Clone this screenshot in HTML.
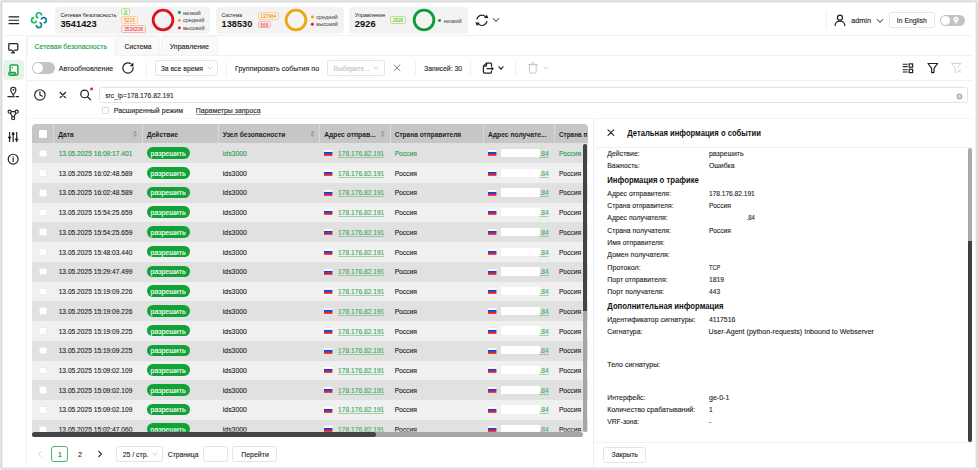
<!DOCTYPE html><html lang="ru"><head><meta charset="utf-8"><title>Сетевая безопасность</title><style>

html,body{margin:0;padding:0;background:#fff;}
body{width:978px;height:470px;overflow:hidden;position:relative;font-family:"Liberation Sans",sans-serif;}
.b{position:absolute;box-sizing:border-box;}
svg{overflow:visible;}
#txt{position:absolute;left:0;top:0;font-family:"Liberation Sans",sans-serif;}
#txt text{white-space:pre;}
.u{text-decoration:underline;text-decoration-thickness:0.7px;text-underline-offset:1px;}
.w{font-weight:700;}

</style></head><body>
<div class="b" style="left:0.00px;top:0.00px;width:978.00px;height:470.00px;border:1px solid #e4e4e4;background:#fff;border-radius:1.5px;"></div>
<div class="b" style="left:1.00px;top:1.00px;width:976.00px;height:468.00px;border:1px solid #d9d9d9;"></div>
<div class="b" style="left:2.00px;top:2.00px;width:974.00px;height:466.00px;border:1px solid #f2f2f2;"></div>
<div class="b" style="left:2.00px;top:34.80px;width:970.00px;height:1.00px;background:#f1f1f1;"></div>
<svg class="b" style="left:8.00px;top:15.00px;" width="12" height="10" viewBox="0 0 12 10"><path d="M1.0 1.8H10.7M1.0 5.2H10.7M1.0 8.6H10.7" stroke="#222" stroke-width="1.15" stroke-linecap="round" fill="none"/></svg>
<svg class="b" style="left:0.00px;top:0.00px;" width="60" height="40" viewBox="0 0 60 40"><g fill="none" stroke-width="1.6" stroke-linecap="butt"><path d="M36.64 20.74A2.6 2.6 0 1 1 34.19 17.60" stroke="#14c03f"/><path d="M38.36 17.94A2.6 2.6 0 1 1 41.50 15.49" stroke="#12b87a"/><path d="M41.16 19.66A2.6 2.6 0 1 1 43.61 22.80" stroke="#0c7c96"/><path d="M39.44 22.46A2.6 2.6 0 1 1 36.30 24.91" stroke="#0c8a7a"/></g></svg>
<div class="b" style="left:54.90px;top:7.00px;width:155.40px;height:26.90px;background:#f3f3f3;border-radius:4px;"></div>
<div class="b" style="left:215.80px;top:7.00px;width:128.20px;height:26.90px;background:#f3f3f3;border-radius:4px;"></div>
<div class="b" style="left:349.00px;top:7.00px;width:118.80px;height:26.90px;background:#f3f3f3;border-radius:4px;"></div>
<div class="b" style="left:121.40px;top:7.50px;width:8.40px;height:7.60px;background:#f0fae4;border:0.9px solid #b4e293;border-radius:1.8px;"></div>
<div class="b" style="left:121.40px;top:16.30px;width:16.20px;height:7.40px;background:#fff3e0;border:0.9px solid #f8d3a0;border-radius:1.8px;"></div>
<div class="b" style="left:121.40px;top:25.00px;width:24.20px;height:7.60px;background:#ffeceb;border:0.9px solid #f7b5b2;border-radius:1.8px;"></div>
<div class="b" style="left:257.50px;top:12.40px;width:21.40px;height:7.20px;background:#fff3e0;border:0.9px solid #f8d3a0;border-radius:1.8px;"></div>
<div class="b" style="left:257.50px;top:21.10px;width:13.50px;height:7.30px;background:#ffeceb;border:0.9px solid #f7b5b2;border-radius:1.8px;"></div>
<div class="b" style="left:390.00px;top:16.40px;width:15.70px;height:7.60px;background:#f0fae4;border:0.9px solid #b4e293;border-radius:1.8px;"></div>
<svg class="b" style="left:151.00px;top:8.45px;" width="24" height="24" viewBox="0 0 24 24"><circle cx="12" cy="12" r="9.85" fill="none" stroke="#dc1420" stroke-width="2.8"/></svg>
<svg class="b" style="left:284.10px;top:8.45px;" width="24" height="24" viewBox="0 0 24 24"><circle cx="12" cy="12" r="9.85" fill="none" stroke="#eca90f" stroke-width="2.8"/></svg>
<svg class="b" style="left:411.70px;top:8.45px;" width="24" height="24" viewBox="0 0 24 24"><circle cx="12" cy="12" r="9.85" fill="none" stroke="#0f9a35" stroke-width="2.8"/></svg>
<svg class="b" style="left:0.00px;top:0.00px;" width="10" height="10" viewBox="0 0 10 10"><circle cx="179.4" cy="12.5" r="1.45" fill="#0f9a35"/></svg>
<svg class="b" style="left:0.00px;top:0.00px;" width="10" height="10" viewBox="0 0 10 10"><circle cx="179.4" cy="20.4" r="1.45" fill="#f0a010"/></svg>
<svg class="b" style="left:0.00px;top:0.00px;" width="10" height="10" viewBox="0 0 10 10"><circle cx="179.4" cy="27.9" r="1.45" fill="#dc1420"/></svg>
<svg class="b" style="left:0.00px;top:0.00px;" width="10" height="10" viewBox="0 0 10 10"><circle cx="312.4" cy="16.9" r="1.45" fill="#f0a010"/></svg>
<svg class="b" style="left:0.00px;top:0.00px;" width="10" height="10" viewBox="0 0 10 10"><circle cx="312.4" cy="24.3" r="1.45" fill="#dc1420"/></svg>
<svg class="b" style="left:0.00px;top:0.00px;" width="10" height="10" viewBox="0 0 10 10"><circle cx="439.6" cy="20.5" r="1.45" fill="#0f9a35"/></svg>
<svg class="b" style="left:0.00px;top:0.00px;" width="10" height="10" viewBox="0 0 10 10"><g fill="none" stroke="#222" stroke-width="1.2"><path d="M476.83 19.41A5.15 5.15 0 0 1 485.60 16.72"/><path d="M486.97 21.19A5.15 5.15 0 0 1 478.20 23.88"/></g><path d="M486.98 14.70L483.96 17.90L488.34 18.26Z" fill="#222"/><path d="M476.82 25.90L479.84 22.70L475.46 22.34Z" fill="#222"/></svg>
<svg class="b" style="left:491.45px;top:15.40px;" width="10" height="10" viewBox="0 0 10 10"><path d="M2.30 3.50L5 6.50L7.70 3.50" fill="none" stroke="#222" stroke-width="1.0" stroke-linecap="round" stroke-linejoin="round"/></svg>
<div class="b" style="left:826.20px;top:12.00px;width:1.00px;height:15.50px;background:#f1f1f1;"></div>
<svg class="b" style="left:0.00px;top:0.00px;" width="10" height="10" viewBox="0 0 10 10"><g fill="none" stroke="#222" stroke-width="1.25" stroke-linecap="round"><circle cx="839.95" cy="17.7" r="2.5"/><path d="M835.1 25.5A4.85 4.3 0 0 1 844.8 25.5"/></g></svg>
<svg class="b" style="left:874.50px;top:15.50px;" width="10" height="10" viewBox="0 0 10 10"><path d="M2.30 3.50L5 6.50L7.70 3.50" fill="none" stroke="#222" stroke-width="1.0" stroke-linecap="round" stroke-linejoin="round"/></svg>
<div class="b" style="left:888.70px;top:12.40px;width:45.90px;height:16.00px;border:1px solid #e4e4e4;border-radius:2.5px;background:#fff;"></div>
<div class="b" style="left:940.00px;top:15.10px;width:24.60px;height:10.70px;background:#c3c3c3;border-radius:6px;"></div>
<div class="b" style="left:941.00px;top:16.10px;width:8.70px;height:8.70px;background:#fff;border-radius:50%;"></div>
<svg class="b" style="left:952.10px;top:16.20px;" width="8" height="8" viewBox="0 0 8 8"><circle cx="4" cy="3.2" r="2.5" fill="#fff"/><circle cx="4" cy="3.1" r="0.9" fill="#c4c4c4"/><path d="M4 5V7.2" stroke="#fff" stroke-width="2"/></svg>
<div class="b" style="left:26.00px;top:36.00px;width:1.00px;height:431.50px;background:#f1f1f1;"></div>
<div class="b" style="left:3.10px;top:60.20px;width:21.00px;height:19.60px;background:#e4f5e8;border-radius:4px;"></div>
<svg class="b" style="left:0.00px;top:0.00px;" width="10" height="10" viewBox="0 0 10 10">
<g fill="none" stroke="#222" stroke-width="1.25" stroke-linejoin="round" stroke-linecap="round">
<path d="M12.0 50.2H9.7A0.9 0.9 0 0 1 8.8 49.3V44.4A0.9 0.9 0 0 1 9.7 43.5H16.9A0.9 0.9 0 0 1 17.8 44.4V49.3A0.9 0.9 0 0 1 16.9 50.2H14.8"/>
<path d="M12.6 50.4L13.3 51.2L14.0 50.4" stroke-width="1"/>
<path d="M13.3 51.3L14.9 53.1H11.5Z" fill="#222" stroke-width="0.7"/>
</g>
<g stroke="#1fa345" stroke-width="1.4" stroke-linejoin="round">
<rect x="10.1" y="65.0" width="7.8" height="10.0" rx="1.3" fill="#f4fbf6"/>
<rect x="8.7" y="72.5" width="7.0" height="2.7" rx="1.35" fill="#8fd3a1"/>
</g>
<circle cx="12.3" cy="67.8" r="0.75" fill="#1fa345"/>
<g fill="none" stroke="#222" stroke-width="1.15" stroke-linejoin="round" stroke-linecap="round">
<path d="M13.3 94.9C11.2 92.5 10.7 91.3 10.7 89.9A2.6 2.6 0 0 1 15.9 89.9C15.9 91.3 15.4 92.5 13.3 94.9Z"/>
<circle cx="13.3" cy="89.8" r="0.45" stroke-width="0.9"/>
<path d="M7.9 96.5H12.1M16.1 96.5H18.5" stroke-width="1.25"/>
<circle cx="13.3" cy="96.5" r="0.95" stroke-width="0.8"/>
</g>
<g fill="none" stroke="#222" stroke-width="1.15">
<circle cx="9.65" cy="111.65" r="1.55"/><circle cx="16.7" cy="111.65" r="1.55"/><circle cx="13.15" cy="118.2" r="1.55"/>
<path d="M11.2 111.65H15.15M10.4 113.0L12.4 116.85M15.95 113.0L13.9 116.85"/>
</g>
<g fill="none" stroke="#222" stroke-width="1.2" stroke-linecap="butt">
<path d="M9.57 132V142M13.15 132V142M16.7 132V142"/>
<path d="M8.0 137.5H11.1M15.1 139.6H18.3" stroke-width="1.5"/>
</g>
<circle cx="13.15" cy="133.9" r="1.45" fill="#222"/>
<g fill="none" stroke="#222" stroke-width="1.2" stroke-linecap="round">
<circle cx="13.15" cy="159.2" r="4.95"/>
<path d="M13.15 158.4V161.5"/><path d="M13.15 156.8V156.9" stroke-width="1.3"/>
</g>
</svg>
<div class="b" style="left:26.80px;top:36.30px;width:88.20px;height:20.10px;background:#fff;border:1px solid #f2f2f2;border-bottom:none;border-radius:4.5px 4.5px 0 0;"></div>
<div class="b" style="left:116.20px;top:36.30px;width:44.00px;height:19.30px;background:#f9f9f9;border:1px solid #f2f2f2;border-bottom:none;border-radius:4.5px 4.5px 0 0;"></div>
<div class="b" style="left:161.30px;top:36.30px;width:56.50px;height:19.30px;background:#f9f9f9;border:1px solid #f2f2f2;border-bottom:none;border-radius:4.5px 4.5px 0 0;"></div>
<div class="b" style="left:115.00px;top:55.30px;width:857.00px;height:1.00px;background:#f2f2f2;"></div>
<div class="b" style="left:27.00px;top:80.00px;width:945.00px;height:1.00px;background:#f1f1f1;"></div>
<div class="b" style="left:32.10px;top:62.30px;width:22.50px;height:11.60px;background:#c3c3c3;border-radius:6px;"></div>
<div class="b" style="left:33.10px;top:63.30px;width:9.60px;height:9.60px;background:#fff;border-radius:50%;"></div>
<svg class="b" style="left:0.00px;top:0.00px;" width="10" height="10" viewBox="0 0 10 10"><path d="M133.10 67.46A5.15 5.15 0 1 1 130.78 63.68" fill="none" stroke="#222" stroke-width="1.2" stroke-linecap="round"/><path d="M133.4 62.6V66.2H129.7Z" fill="#111"/></svg>
<div class="b" style="left:146.20px;top:60.50px;width:1.00px;height:15.50px;background:#f1f1f1;"></div>
<div class="b" style="left:154.90px;top:60.40px;width:62.70px;height:15.80px;border:1px solid #e4e4e4;border-radius:2.5px;background:#fff;"></div>
<svg class="b" style="left:204.60px;top:62.90px;" width="10" height="10" viewBox="0 0 10 10"><path d="M2.90 3.70L5 6.30L7.10 3.70" fill="none" stroke="#c8c8c8" stroke-width="0.9" stroke-linecap="round" stroke-linejoin="round"/></svg>
<div class="b" style="left:225.80px;top:60.50px;width:1.00px;height:15.50px;background:#f1f1f1;"></div>
<div class="b" style="left:327.10px;top:60.40px;width:57.50px;height:15.80px;border:1px solid #e4e4e4;border-radius:2.5px;background:#fff;"></div>
<svg class="b" style="left:371.30px;top:62.90px;" width="10" height="10" viewBox="0 0 10 10"><path d="M2.90 3.70L5 6.30L7.10 3.70" fill="none" stroke="#c8c8c8" stroke-width="0.9" stroke-linecap="round" stroke-linejoin="round"/></svg>
<svg class="b" style="left:392.30px;top:62.90px;" width="10" height="10" viewBox="0 0 10 10"><path d="M2.1 2.0L7.9 7.6M7.9 2.0L2.1 7.6" stroke="#777" stroke-width="1.0" stroke-linecap="round"/></svg>
<div class="b" style="left:415.10px;top:60.50px;width:1.00px;height:15.50px;background:#f1f1f1;"></div>
<div class="b" style="left:470.10px;top:60.50px;width:1.00px;height:15.50px;background:#f1f1f1;"></div>
<svg class="b" style="left:0.00px;top:0.00px;" width="10" height="10" viewBox="0 0 10 10"><g fill="none" stroke="#222" stroke-width="1.25" stroke-linejoin="round" stroke-linecap="round">
<path d="M491.5 66.2V64.0A0.9 0.9 0 0 0 490.6 63.1H486.4L483.4 66.1V72.1A0.9 0.9 0 0 0 484.3 73.0H490.6A0.9 0.9 0 0 0 491.5 72.1V71.0"/>
<path d="M486.5 63.3V65.4A0.8 0.8 0 0 1 485.7 66.2H483.6"/>
<path d="M487.0 68.7H492.0"/></g>
<path d="M491.5 66.6L494.0 68.7L491.5 70.8Z" fill="#222"/></svg>
<svg class="b" style="left:496.20px;top:63.00px;" width="10" height="10" viewBox="0 0 10 10"><path d="M2.90 3.70L5 6.30L7.10 3.70" fill="none" stroke="#222" stroke-width="1.05" stroke-linecap="round" stroke-linejoin="round"/></svg>
<div class="b" style="left:514.70px;top:60.50px;width:1.00px;height:15.50px;background:#f1f1f1;"></div>
<svg class="b" style="left:0.00px;top:0.00px;" width="10" height="10" viewBox="0 0 10 10"><g fill="none" stroke="#c6c6c6" stroke-width="1.0" stroke-linejoin="round" stroke-linecap="round">
<path d="M528.1 64.7H537.7"/><path d="M531.4 64.5A1.5 1.8 0 0 1 534.4 64.5"/>
<path d="M529.6 65.2V72.0A1.1 1.1 0 0 0 530.7 73.1H535.1A1.1 1.1 0 0 0 536.2 72.0V65.2"/></g></svg>
<svg class="b" style="left:541.20px;top:63.00px;" width="10" height="10" viewBox="0 0 10 10"><path d="M2.90 3.70L5 6.30L7.10 3.70" fill="none" stroke="#cfcfcf" stroke-width="0.9" stroke-linecap="round" stroke-linejoin="round"/></svg>
<svg class="b" style="left:0.00px;top:0.00px;" width="10" height="10" viewBox="0 0 10 10"><g fill="none" stroke="#222" stroke-width="1.1"><path d="M902.7 64.3H907.6M902.7 66.6H907.6M902.7 69.7H907.6M902.7 72.0H907.6"/><rect x="909.2" y="63.9" width="3.4" height="3.3" stroke-width="1.2"/><rect x="909.2" y="69.3" width="3.4" height="3.3" stroke-width="1.2"/></g></svg>
<svg class="b" style="left:926.50px;top:62.00px;" width="12" height="12" viewBox="0 0 12 12"><path d="M1 1.5H10.6L7 6.3V10.6H4.6V6.3Z" fill="none" stroke="#222" stroke-width="1.2" stroke-linejoin="round"/></svg>
<svg class="b" style="left:951.00px;top:61.50px;" width="12" height="12" viewBox="0 0 12 12"><g fill="none" stroke="#c9c9c9" stroke-width="0.9" stroke-linejoin="round" stroke-linecap="round"><path d="M6.6 5.6L9.8 1.4H0.6L4.2 6.2V10.6"/><path d="M7 7.6L9.8 10.4M9.8 7.6L7 10.4"/></g></svg>
<svg class="b" style="left:0.00px;top:0.00px;" width="10" height="10" viewBox="0 0 10 10"><g fill="none" stroke="#222" stroke-width="1.15" stroke-linecap="round" stroke-linejoin="round"><circle cx="39.9" cy="94.95" r="5.2"/><path d="M39.9 91.9V95.0L42.3 96.2"/></g>
<path d="M60.2 92.5L65.5 97.6M65.5 92.5L60.2 97.6" stroke="#222" stroke-width="1.3" stroke-linecap="round"/>
<g fill="none" stroke="#222" stroke-width="1.2" stroke-linecap="round"><circle cx="84.6" cy="93.9" r="3.85"/><path d="M87.4 96.8L90.5 99.8"/></g><circle cx="91.6" cy="89.0" r="1.45" fill="#ee1c2e"/></svg>
<div class="b" style="left:99.10px;top:87.30px;width:869.30px;height:15.30px;border:1px solid #e4e4e4;border-radius:2.5px;background:#fff;"></div>
<svg class="b" style="left:955.50px;top:93.00px;" width="7" height="7" viewBox="0 0 7 7"><circle cx="3.5" cy="3.5" r="2.2" fill="#dedede" stroke="#b4b4b4" stroke-width="1.6"/></svg>
<div class="b" style="left:102.20px;top:107.40px;width:6.70px;height:6.90px;border:0.8px solid #d9d9d9;border-radius:1.2px;background:#fff;"></div>
<div class="b" style="left:27.00px;top:117.80px;width:945.00px;height:1.00px;background:#f4f4f4;"></div>
<div class="b" style="left:32.00px;top:127.40px;width:555.50px;height:304.20px;background:#e1e1e1;"></div>
<div class="b" style="left:32.00px;top:124.40px;width:555.50px;height:19.10px;background:#c6c6c6;border-radius:4px 4px 0 0;"></div>
<div class="b" style="left:32.0px;top:143.5px;width:555.5px;height:288.10px;overflow:hidden;" id="rows">
<div class="b" style="left:0;top:0.00px;width:555.5px;height:19.83px;background:#e1e1e1;"></div>
<div class="b" style="left:7.20px;top:6.05px;width:7.8px;height:7.5px;background:#fff;border:0.5px solid #ececec;border-radius:1.2px;"></div>
<div class="b" style="left:114.60px;top:3.75px;width:43.4px;height:11.6px;background:#12a338;border-radius:6px;"></div>
<svg class="b" style="left:291.70px;top:6.70px" width="8.4" height="5.8" viewBox="0 0 8.4 5.8"><rect width="8.4" height="2" fill="#fff"/><rect y="1.93" width="8.4" height="2" fill="#1c3fd0"/><rect y="3.86" width="8.4" height="1.94" fill="#e0202c"/></svg>
<svg class="b" style="left:455.60px;top:6.70px" width="8.4" height="5.8" viewBox="0 0 8.4 5.8"><rect width="8.4" height="2" fill="#fff"/><rect y="1.93" width="8.4" height="2" fill="#1c3fd0"/><rect y="3.86" width="8.4" height="1.94" fill="#e0202c"/></svg>
<div class="b" style="left:469.00px;top:5.40px;width:39.4px;height:8.3px;background:#fff;"></div>
<div class="b" style="left:0;top:19.73px;width:555.5px;height:19.83px;background:#f0f0f0;"></div>
<div class="b" style="left:7.20px;top:25.78px;width:7.8px;height:7.5px;background:#fff;border:0.5px solid #ececec;border-radius:1.2px;"></div>
<div class="b" style="left:114.60px;top:23.48px;width:43.4px;height:11.6px;background:#12a338;border-radius:6px;"></div>
<svg class="b" style="left:291.70px;top:26.43px" width="8.4" height="5.8" viewBox="0 0 8.4 5.8"><rect width="8.4" height="2" fill="#fff"/><rect y="1.93" width="8.4" height="2" fill="#1c3fd0"/><rect y="3.86" width="8.4" height="1.94" fill="#e0202c"/></svg>
<svg class="b" style="left:455.60px;top:26.43px" width="8.4" height="5.8" viewBox="0 0 8.4 5.8"><rect width="8.4" height="2" fill="#fff"/><rect y="1.93" width="8.4" height="2" fill="#1c3fd0"/><rect y="3.86" width="8.4" height="1.94" fill="#e0202c"/></svg>
<div class="b" style="left:469.00px;top:25.13px;width:39.4px;height:8.3px;background:#fff;"></div>
<div class="b" style="left:0;top:39.46px;width:555.5px;height:19.83px;background:#e1e1e1;"></div>
<div class="b" style="left:7.20px;top:45.51px;width:7.8px;height:7.5px;background:#fff;border:0.5px solid #ececec;border-radius:1.2px;"></div>
<div class="b" style="left:114.60px;top:43.21px;width:43.4px;height:11.6px;background:#12a338;border-radius:6px;"></div>
<svg class="b" style="left:291.70px;top:46.16px" width="8.4" height="5.8" viewBox="0 0 8.4 5.8"><rect width="8.4" height="2" fill="#fff"/><rect y="1.93" width="8.4" height="2" fill="#1c3fd0"/><rect y="3.86" width="8.4" height="1.94" fill="#e0202c"/></svg>
<svg class="b" style="left:455.60px;top:46.16px" width="8.4" height="5.8" viewBox="0 0 8.4 5.8"><rect width="8.4" height="2" fill="#fff"/><rect y="1.93" width="8.4" height="2" fill="#1c3fd0"/><rect y="3.86" width="8.4" height="1.94" fill="#e0202c"/></svg>
<div class="b" style="left:469.00px;top:44.86px;width:39.4px;height:8.3px;background:#fff;"></div>
<div class="b" style="left:0;top:59.19px;width:555.5px;height:19.83px;background:#f0f0f0;"></div>
<div class="b" style="left:7.20px;top:65.24px;width:7.8px;height:7.5px;background:#fff;border:0.5px solid #ececec;border-radius:1.2px;"></div>
<div class="b" style="left:114.60px;top:62.94px;width:43.4px;height:11.6px;background:#12a338;border-radius:6px;"></div>
<svg class="b" style="left:291.70px;top:65.89px" width="8.4" height="5.8" viewBox="0 0 8.4 5.8"><rect width="8.4" height="2" fill="#fff"/><rect y="1.93" width="8.4" height="2" fill="#1c3fd0"/><rect y="3.86" width="8.4" height="1.94" fill="#e0202c"/></svg>
<svg class="b" style="left:455.60px;top:65.89px" width="8.4" height="5.8" viewBox="0 0 8.4 5.8"><rect width="8.4" height="2" fill="#fff"/><rect y="1.93" width="8.4" height="2" fill="#1c3fd0"/><rect y="3.86" width="8.4" height="1.94" fill="#e0202c"/></svg>
<div class="b" style="left:469.00px;top:64.59px;width:39.4px;height:8.3px;background:#fff;"></div>
<div class="b" style="left:0;top:78.92px;width:555.5px;height:19.83px;background:#e1e1e1;"></div>
<div class="b" style="left:7.20px;top:84.97px;width:7.8px;height:7.5px;background:#fff;border:0.5px solid #ececec;border-radius:1.2px;"></div>
<div class="b" style="left:114.60px;top:82.67px;width:43.4px;height:11.6px;background:#12a338;border-radius:6px;"></div>
<svg class="b" style="left:291.70px;top:85.62px" width="8.4" height="5.8" viewBox="0 0 8.4 5.8"><rect width="8.4" height="2" fill="#fff"/><rect y="1.93" width="8.4" height="2" fill="#1c3fd0"/><rect y="3.86" width="8.4" height="1.94" fill="#e0202c"/></svg>
<svg class="b" style="left:455.60px;top:85.62px" width="8.4" height="5.8" viewBox="0 0 8.4 5.8"><rect width="8.4" height="2" fill="#fff"/><rect y="1.93" width="8.4" height="2" fill="#1c3fd0"/><rect y="3.86" width="8.4" height="1.94" fill="#e0202c"/></svg>
<div class="b" style="left:469.00px;top:84.32px;width:39.4px;height:8.3px;background:#fff;"></div>
<div class="b" style="left:0;top:98.65px;width:555.5px;height:19.83px;background:#f0f0f0;"></div>
<div class="b" style="left:7.20px;top:104.70px;width:7.8px;height:7.5px;background:#fff;border:0.5px solid #ececec;border-radius:1.2px;"></div>
<div class="b" style="left:114.60px;top:102.40px;width:43.4px;height:11.6px;background:#12a338;border-radius:6px;"></div>
<svg class="b" style="left:291.70px;top:105.35px" width="8.4" height="5.8" viewBox="0 0 8.4 5.8"><rect width="8.4" height="2" fill="#fff"/><rect y="1.93" width="8.4" height="2" fill="#1c3fd0"/><rect y="3.86" width="8.4" height="1.94" fill="#e0202c"/></svg>
<svg class="b" style="left:455.60px;top:105.35px" width="8.4" height="5.8" viewBox="0 0 8.4 5.8"><rect width="8.4" height="2" fill="#fff"/><rect y="1.93" width="8.4" height="2" fill="#1c3fd0"/><rect y="3.86" width="8.4" height="1.94" fill="#e0202c"/></svg>
<div class="b" style="left:469.00px;top:104.05px;width:39.4px;height:8.3px;background:#fff;"></div>
<div class="b" style="left:0;top:118.38px;width:555.5px;height:19.83px;background:#e1e1e1;"></div>
<div class="b" style="left:7.20px;top:124.43px;width:7.8px;height:7.5px;background:#fff;border:0.5px solid #ececec;border-radius:1.2px;"></div>
<div class="b" style="left:114.60px;top:122.13px;width:43.4px;height:11.6px;background:#12a338;border-radius:6px;"></div>
<svg class="b" style="left:291.70px;top:125.08px" width="8.4" height="5.8" viewBox="0 0 8.4 5.8"><rect width="8.4" height="2" fill="#fff"/><rect y="1.93" width="8.4" height="2" fill="#1c3fd0"/><rect y="3.86" width="8.4" height="1.94" fill="#e0202c"/></svg>
<svg class="b" style="left:455.60px;top:125.08px" width="8.4" height="5.8" viewBox="0 0 8.4 5.8"><rect width="8.4" height="2" fill="#fff"/><rect y="1.93" width="8.4" height="2" fill="#1c3fd0"/><rect y="3.86" width="8.4" height="1.94" fill="#e0202c"/></svg>
<div class="b" style="left:469.00px;top:123.78px;width:39.4px;height:8.3px;background:#fff;"></div>
<div class="b" style="left:0;top:138.11px;width:555.5px;height:19.83px;background:#f0f0f0;"></div>
<div class="b" style="left:7.20px;top:144.16px;width:7.8px;height:7.5px;background:#fff;border:0.5px solid #ececec;border-radius:1.2px;"></div>
<div class="b" style="left:114.60px;top:141.86px;width:43.4px;height:11.6px;background:#12a338;border-radius:6px;"></div>
<svg class="b" style="left:291.70px;top:144.81px" width="8.4" height="5.8" viewBox="0 0 8.4 5.8"><rect width="8.4" height="2" fill="#fff"/><rect y="1.93" width="8.4" height="2" fill="#1c3fd0"/><rect y="3.86" width="8.4" height="1.94" fill="#e0202c"/></svg>
<svg class="b" style="left:455.60px;top:144.81px" width="8.4" height="5.8" viewBox="0 0 8.4 5.8"><rect width="8.4" height="2" fill="#fff"/><rect y="1.93" width="8.4" height="2" fill="#1c3fd0"/><rect y="3.86" width="8.4" height="1.94" fill="#e0202c"/></svg>
<div class="b" style="left:469.00px;top:143.51px;width:39.4px;height:8.3px;background:#fff;"></div>
<div class="b" style="left:0;top:157.84px;width:555.5px;height:19.83px;background:#e1e1e1;"></div>
<div class="b" style="left:7.20px;top:163.89px;width:7.8px;height:7.5px;background:#fff;border:0.5px solid #ececec;border-radius:1.2px;"></div>
<div class="b" style="left:114.60px;top:161.59px;width:43.4px;height:11.6px;background:#12a338;border-radius:6px;"></div>
<svg class="b" style="left:291.70px;top:164.54px" width="8.4" height="5.8" viewBox="0 0 8.4 5.8"><rect width="8.4" height="2" fill="#fff"/><rect y="1.93" width="8.4" height="2" fill="#1c3fd0"/><rect y="3.86" width="8.4" height="1.94" fill="#e0202c"/></svg>
<svg class="b" style="left:455.60px;top:164.54px" width="8.4" height="5.8" viewBox="0 0 8.4 5.8"><rect width="8.4" height="2" fill="#fff"/><rect y="1.93" width="8.4" height="2" fill="#1c3fd0"/><rect y="3.86" width="8.4" height="1.94" fill="#e0202c"/></svg>
<div class="b" style="left:469.00px;top:163.24px;width:39.4px;height:8.3px;background:#fff;"></div>
<div class="b" style="left:0;top:177.57px;width:555.5px;height:19.83px;background:#f0f0f0;"></div>
<div class="b" style="left:7.20px;top:183.62px;width:7.8px;height:7.5px;background:#fff;border:0.5px solid #ececec;border-radius:1.2px;"></div>
<div class="b" style="left:114.60px;top:181.32px;width:43.4px;height:11.6px;background:#12a338;border-radius:6px;"></div>
<svg class="b" style="left:291.70px;top:184.27px" width="8.4" height="5.8" viewBox="0 0 8.4 5.8"><rect width="8.4" height="2" fill="#fff"/><rect y="1.93" width="8.4" height="2" fill="#1c3fd0"/><rect y="3.86" width="8.4" height="1.94" fill="#e0202c"/></svg>
<svg class="b" style="left:455.60px;top:184.27px" width="8.4" height="5.8" viewBox="0 0 8.4 5.8"><rect width="8.4" height="2" fill="#fff"/><rect y="1.93" width="8.4" height="2" fill="#1c3fd0"/><rect y="3.86" width="8.4" height="1.94" fill="#e0202c"/></svg>
<div class="b" style="left:469.00px;top:182.97px;width:39.4px;height:8.3px;background:#fff;"></div>
<div class="b" style="left:0;top:197.30px;width:555.5px;height:19.83px;background:#e1e1e1;"></div>
<div class="b" style="left:7.20px;top:203.35px;width:7.8px;height:7.5px;background:#fff;border:0.5px solid #ececec;border-radius:1.2px;"></div>
<div class="b" style="left:114.60px;top:201.05px;width:43.4px;height:11.6px;background:#12a338;border-radius:6px;"></div>
<svg class="b" style="left:291.70px;top:204.00px" width="8.4" height="5.8" viewBox="0 0 8.4 5.8"><rect width="8.4" height="2" fill="#fff"/><rect y="1.93" width="8.4" height="2" fill="#1c3fd0"/><rect y="3.86" width="8.4" height="1.94" fill="#e0202c"/></svg>
<svg class="b" style="left:455.60px;top:204.00px" width="8.4" height="5.8" viewBox="0 0 8.4 5.8"><rect width="8.4" height="2" fill="#fff"/><rect y="1.93" width="8.4" height="2" fill="#1c3fd0"/><rect y="3.86" width="8.4" height="1.94" fill="#e0202c"/></svg>
<div class="b" style="left:469.00px;top:202.70px;width:39.4px;height:8.3px;background:#fff;"></div>
<div class="b" style="left:0;top:217.03px;width:555.5px;height:19.83px;background:#f0f0f0;"></div>
<div class="b" style="left:7.20px;top:223.08px;width:7.8px;height:7.5px;background:#fff;border:0.5px solid #ececec;border-radius:1.2px;"></div>
<div class="b" style="left:114.60px;top:220.78px;width:43.4px;height:11.6px;background:#12a338;border-radius:6px;"></div>
<svg class="b" style="left:291.70px;top:223.73px" width="8.4" height="5.8" viewBox="0 0 8.4 5.8"><rect width="8.4" height="2" fill="#fff"/><rect y="1.93" width="8.4" height="2" fill="#1c3fd0"/><rect y="3.86" width="8.4" height="1.94" fill="#e0202c"/></svg>
<svg class="b" style="left:455.60px;top:223.73px" width="8.4" height="5.8" viewBox="0 0 8.4 5.8"><rect width="8.4" height="2" fill="#fff"/><rect y="1.93" width="8.4" height="2" fill="#1c3fd0"/><rect y="3.86" width="8.4" height="1.94" fill="#e0202c"/></svg>
<div class="b" style="left:469.00px;top:222.43px;width:39.4px;height:8.3px;background:#fff;"></div>
<div class="b" style="left:0;top:236.76px;width:555.5px;height:19.83px;background:#e1e1e1;"></div>
<div class="b" style="left:7.20px;top:242.81px;width:7.8px;height:7.5px;background:#fff;border:0.5px solid #ececec;border-radius:1.2px;"></div>
<div class="b" style="left:114.60px;top:240.51px;width:43.4px;height:11.6px;background:#12a338;border-radius:6px;"></div>
<svg class="b" style="left:291.70px;top:243.46px" width="8.4" height="5.8" viewBox="0 0 8.4 5.8"><rect width="8.4" height="2" fill="#fff"/><rect y="1.93" width="8.4" height="2" fill="#1c3fd0"/><rect y="3.86" width="8.4" height="1.94" fill="#e0202c"/></svg>
<svg class="b" style="left:455.60px;top:243.46px" width="8.4" height="5.8" viewBox="0 0 8.4 5.8"><rect width="8.4" height="2" fill="#fff"/><rect y="1.93" width="8.4" height="2" fill="#1c3fd0"/><rect y="3.86" width="8.4" height="1.94" fill="#e0202c"/></svg>
<div class="b" style="left:469.00px;top:242.16px;width:39.4px;height:8.3px;background:#fff;"></div>
<div class="b" style="left:0;top:256.49px;width:555.5px;height:19.83px;background:#f0f0f0;"></div>
<div class="b" style="left:7.20px;top:262.54px;width:7.8px;height:7.5px;background:#fff;border:0.5px solid #ececec;border-radius:1.2px;"></div>
<div class="b" style="left:114.60px;top:260.24px;width:43.4px;height:11.6px;background:#12a338;border-radius:6px;"></div>
<svg class="b" style="left:291.70px;top:263.19px" width="8.4" height="5.8" viewBox="0 0 8.4 5.8"><rect width="8.4" height="2" fill="#fff"/><rect y="1.93" width="8.4" height="2" fill="#1c3fd0"/><rect y="3.86" width="8.4" height="1.94" fill="#e0202c"/></svg>
<svg class="b" style="left:455.60px;top:263.19px" width="8.4" height="5.8" viewBox="0 0 8.4 5.8"><rect width="8.4" height="2" fill="#fff"/><rect y="1.93" width="8.4" height="2" fill="#1c3fd0"/><rect y="3.86" width="8.4" height="1.94" fill="#e0202c"/></svg>
<div class="b" style="left:469.00px;top:261.89px;width:39.4px;height:8.3px;background:#fff;"></div>
<div class="b" style="left:0;top:276.22px;width:555.5px;height:19.83px;background:#e1e1e1;"></div>
<div class="b" style="left:7.20px;top:282.27px;width:7.8px;height:7.5px;background:#fff;border:0.5px solid #ececec;border-radius:1.2px;"></div>
<div class="b" style="left:114.60px;top:279.97px;width:43.4px;height:11.6px;background:#12a338;border-radius:6px;"></div>
<svg class="b" style="left:291.70px;top:282.92px" width="8.4" height="5.8" viewBox="0 0 8.4 5.8"><rect width="8.4" height="2" fill="#fff"/><rect y="1.93" width="8.4" height="2" fill="#1c3fd0"/><rect y="3.86" width="8.4" height="1.94" fill="#e0202c"/></svg>
<svg class="b" style="left:455.60px;top:282.92px" width="8.4" height="5.8" viewBox="0 0 8.4 5.8"><rect width="8.4" height="2" fill="#fff"/><rect y="1.93" width="8.4" height="2" fill="#1c3fd0"/><rect y="3.86" width="8.4" height="1.94" fill="#e0202c"/></svg>
<div class="b" style="left:469.00px;top:281.62px;width:39.4px;height:8.3px;background:#fff;"></div>
</div>
<div class="b" style="left:52.90px;top:124.40px;width:1.00px;height:19.10px;background:#d9d9d9;"></div>
<div class="b" style="left:141.70px;top:124.40px;width:1.00px;height:19.10px;background:#d9d9d9;"></div>
<div class="b" style="left:217.80px;top:124.40px;width:1.00px;height:19.10px;background:#d9d9d9;"></div>
<div class="b" style="left:318.90px;top:124.40px;width:1.00px;height:19.10px;background:#d9d9d9;"></div>
<div class="b" style="left:389.50px;top:124.40px;width:1.00px;height:19.10px;background:#d9d9d9;"></div>
<div class="b" style="left:482.80px;top:124.40px;width:1.00px;height:19.10px;background:#d9d9d9;"></div>
<div class="b" style="left:554.10px;top:124.40px;width:1.00px;height:19.10px;background:#d9d9d9;"></div>
<div class="b" style="left:39.20px;top:130.40px;width:7.70px;height:7.60px;background:#fff;border-radius:1px;"></div>
<svg class="b" style="left:0.00px;top:0.00px;" width="10" height="10" viewBox="0 0 10 10"><path d="M133.10 133.3L135.10 130.8L137.10 133.3Z M133.10 134.6L135.10 137.1L137.10 134.6Z" fill="#989898"/></svg>
<svg class="b" style="left:0.00px;top:0.00px;" width="10" height="10" viewBox="0 0 10 10"><path d="M310.40 133.3L312.40 130.8L314.40 133.3Z M310.40 134.6L312.40 137.1L314.40 134.6Z" fill="#989898"/></svg>
<svg class="b" style="left:0.00px;top:0.00px;" width="10" height="10" viewBox="0 0 10 10"><path d="M380.80 133.3L382.80 130.8L384.80 133.3Z M380.80 134.6L382.80 137.1L384.80 134.6Z" fill="#989898"/></svg>
<div class="b" style="left:32.00px;top:432.00px;width:550.60px;height:4.90px;background:#a6a6a6;border-radius:2.5px;"></div>
<div class="b" style="left:32.00px;top:432.00px;width:343.50px;height:4.90px;background:#444;border-radius:2.5px;"></div>
<div class="b" style="left:582.90px;top:143.60px;width:4.60px;height:288.00px;background:#a6a6a6;border-radius:2.3px;"></div>
<div class="b" style="left:582.90px;top:143.60px;width:4.60px;height:167.70px;background:#444;border-radius:2.3px 2.3px 0 0;"></div>
<svg class="b" style="left:36.50px;top:449.70px;" width="6" height="8" viewBox="0 0 6 8"><path d="M4.2 1.3L1.6 4L4.2 6.7" fill="none" stroke="#cfcfcf" stroke-width="0.9" stroke-linecap="round" stroke-linejoin="round"/></svg>
<div class="b" style="left:51.40px;top:445.60px;width:16.40px;height:16.10px;border:1px solid #45b568;border-radius:3px;background:#fff;"></div>
<svg class="b" style="left:97.20px;top:449.70px;" width="6" height="8" viewBox="0 0 6 8"><path d="M1.8 1.3L4.4 4L1.8 6.7" fill="none" stroke="#2a2a2a" stroke-width="1.1" stroke-linecap="round" stroke-linejoin="round"/></svg>
<div class="b" style="left:116.30px;top:445.60px;width:47.20px;height:16.10px;border:1px solid #e4e4e4;border-radius:2.5px;background:#fff;"></div>
<svg class="b" style="left:150.20px;top:449.20px;" width="10" height="10" viewBox="0 0 10 10"><path d="M3.00 3.75L5 6.25L7.00 3.75" fill="none" stroke="#c8c8c8" stroke-width="0.9" stroke-linecap="round" stroke-linejoin="round"/></svg>
<div class="b" style="left:202.80px;top:445.60px;width:25.20px;height:16.10px;border:1px solid #e4e4e4;border-radius:2.5px;background:#fff;"></div>
<div class="b" style="left:232.40px;top:445.60px;width:45.00px;height:16.10px;border:1px solid #e4e4e4;border-radius:2.5px;background:#fff;"></div>
<div class="b" style="left:593.30px;top:118.50px;width:1.00px;height:349.00px;background:#ececec;"></div>
<svg class="b" style="left:606.00px;top:127.90px;" width="10" height="10" viewBox="0 0 10 10"><path d="M2.0 1.8L7.8 7.4M7.8 1.8L2.0 7.4" stroke="#222" stroke-width="1.1" stroke-linecap="round"/></svg>
<div class="b" style="left:594.60px;top:146.80px;width:377.40px;height:1.00px;background:#f1f1f1;"></div>
<div class="b" style="left:968.10px;top:148.00px;width:4.10px;height:293.50px;background:#a9a9a9;border-radius:2px;"></div>
<div class="b" style="left:968.10px;top:241.00px;width:4.10px;height:200.50px;background:#3f3f3f;border-radius:0 0 2px 2px;"></div>
<div class="b" style="left:594.60px;top:441.80px;width:377.40px;height:1.00px;background:#f1f1f1;"></div>
<div class="b" style="left:603.40px;top:446.60px;width:42.70px;height:16.40px;border:1px solid #e4e4e4;border-radius:2.5px;background:#fff;"></div>
<svg id="txt" width="978" height="470" viewBox="0 0 978 470"><defs>
<clipPath id="cr"><rect x="32.0" y="143.5" width="550.7" height="288.1"/></clipPath>
<clipPath id="ch"><rect x="32.0" y="124.4" width="555.6" height="19.099999999999994"/></clipPath>
</defs>
<text x="60.40" y="17" font-size="6.1" fill="#222" textLength="56.20" lengthAdjust="spacingAndGlyphs">Сетевая безопасность</text>
<text x="60.40" y="27" font-size="9.5" fill="#111" textLength="36.30" lengthAdjust="spacingAndGlyphs" class="w">3541423</text>
<text x="221.50" y="17" font-size="6.1" fill="#222" textLength="20.50" lengthAdjust="spacingAndGlyphs">Система</text>
<text x="221.50" y="27" font-size="9.5" fill="#111" textLength="30.80" lengthAdjust="spacingAndGlyphs" class="w">138530</text>
<text x="354.80" y="17" font-size="6.1" fill="#222" textLength="30.40" lengthAdjust="spacingAndGlyphs">Управление</text>
<text x="354.80" y="27" font-size="9.5" fill="#111" textLength="20.80" lengthAdjust="spacingAndGlyphs" class="w">2926</text>
<text x="124.20" y="14" font-size="5.4" fill="#4aa321" textLength="2.90" lengthAdjust="spacingAndGlyphs">0</text>
<text x="124.20" y="22" font-size="5.4" fill="#dd7c12" textLength="10.70" lengthAdjust="spacingAndGlyphs">5215</text>
<text x="124.20" y="31" font-size="5.4" fill="#d8262c" textLength="18.70" lengthAdjust="spacingAndGlyphs">3536208</text>
<text x="260.30" y="18" font-size="5.4" fill="#dd7c12" textLength="15.90" lengthAdjust="spacingAndGlyphs">137964</text>
<text x="260.30" y="27" font-size="5.4" fill="#d8262c" textLength="8.00" lengthAdjust="spacingAndGlyphs">566</text>
<text x="392.80" y="22" font-size="5.4" fill="#4aa321" textLength="10.20" lengthAdjust="spacingAndGlyphs">2926</text>
<text x="182.90" y="14.5" font-size="5.7" fill="#3a3a3a" textLength="17.90" lengthAdjust="spacingAndGlyphs">низкий</text>
<text x="182.90" y="22.4" font-size="5.7" fill="#3a3a3a" textLength="21.50" lengthAdjust="spacingAndGlyphs">средний</text>
<text x="182.90" y="29.9" font-size="5.7" fill="#3a3a3a" textLength="21.70" lengthAdjust="spacingAndGlyphs">высокий</text>
<text x="316.20" y="18.9" font-size="5.7" fill="#3a3a3a" textLength="21.50" lengthAdjust="spacingAndGlyphs">средний</text>
<text x="316.20" y="26.3" font-size="5.7" fill="#3a3a3a" textLength="21.70" lengthAdjust="spacingAndGlyphs">высокий</text>
<text x="443.80" y="22.5" font-size="5.7" fill="#3a3a3a" textLength="17.90" lengthAdjust="spacingAndGlyphs">низкий</text>
<text x="851.20" y="23" font-size="8.0" fill="#1f1f1f" stroke="#1f1f1f" stroke-width="0.13" textLength="19.80" lengthAdjust="spacingAndGlyphs">admin</text>
<text x="896.80" y="23" font-size="8.0" fill="#1f1f1f" stroke="#1f1f1f" stroke-width="0.13" textLength="30.00" lengthAdjust="spacingAndGlyphs">In English</text>
<text x="34.60" y="49" font-size="8.0" fill="#17a043" stroke="#17a043" stroke-width="0.13" textLength="72.40" lengthAdjust="spacingAndGlyphs">Сетевая безопасность</text>
<text x="124.60" y="49" font-size="8.0" fill="#1f1f1f" stroke="#1f1f1f" stroke-width="0.13" textLength="27.00" lengthAdjust="spacingAndGlyphs">Система</text>
<text x="169.70" y="49" font-size="8.0" fill="#1f1f1f" stroke="#1f1f1f" stroke-width="0.13" textLength="39.30" lengthAdjust="spacingAndGlyphs">Управление</text>
<text x="58.80" y="71" font-size="8.0" fill="#1f1f1f" stroke="#1f1f1f" stroke-width="0.13" textLength="54.50" lengthAdjust="spacingAndGlyphs">Автообновление</text>
<text x="160.70" y="71" font-size="8.0" fill="#1f1f1f" stroke="#1f1f1f" stroke-width="0.13" textLength="42.30" lengthAdjust="spacingAndGlyphs">За все время</text>
<text x="235.00" y="71" font-size="8.0" fill="#1f1f1f" stroke="#1f1f1f" stroke-width="0.13" textLength="84.10" lengthAdjust="spacingAndGlyphs">Группировать события по</text>
<text x="333.50" y="71" font-size="8.0" fill="#bfbfbf" stroke="#bfbfbf" stroke-width="0.13" textLength="36.10" lengthAdjust="spacingAndGlyphs">Выберите...</text>
<text x="424.00" y="71" font-size="8.0" fill="#1f1f1f" stroke="#1f1f1f" stroke-width="0.13" textLength="38.20" lengthAdjust="spacingAndGlyphs">Записей: 30</text>
<text x="105.20" y="98" font-size="8.0" fill="#1f1f1f" stroke="#1f1f1f" stroke-width="0.13" textLength="68.50" lengthAdjust="spacingAndGlyphs">src_ip=178.176.82.191</text>
<text x="113.70" y="113" font-size="8.0" fill="#1f1f1f" stroke="#1f1f1f" stroke-width="0.13" textLength="69.30" lengthAdjust="spacingAndGlyphs">Расширенный режим</text>
<text x="195.80" y="113" font-size="8.0" fill="#1f1f1f" stroke="#1f1f1f" stroke-width="0.13" textLength="64.90" lengthAdjust="spacingAndGlyphs">Параметры запроса</text>
<path d="M195.80 114.35h64.90" stroke="#1f1f1f" stroke-width="0.65" opacity="0.85"/>
<text x="58.30" y="137" font-size="7.7" fill="#1f1f1f" textLength="15.40" lengthAdjust="spacingAndGlyphs" class="w">Дата</text>
<text x="147.00" y="137" font-size="7.7" fill="#1f1f1f" textLength="30.90" lengthAdjust="spacingAndGlyphs" class="w">Действие</text>
<text x="222.80" y="137" font-size="7.7" fill="#1f1f1f" textLength="62.70" lengthAdjust="spacingAndGlyphs" class="w">Узел безопасности</text>
<text x="324.20" y="137" font-size="7.7" fill="#1f1f1f" textLength="51.50" lengthAdjust="spacingAndGlyphs" class="w">Адрес отправ...</text>
<text x="394.70" y="137" font-size="7.7" fill="#1f1f1f" textLength="66.50" lengthAdjust="spacingAndGlyphs" class="w">Страна отправителя</text>
<text x="488.00" y="137" font-size="7.7" fill="#1f1f1f" textLength="58.50" lengthAdjust="spacingAndGlyphs" class="w">Адрес получате...</text>
<text x="57.90" y="457" font-size="8.0" fill="#2a9d4c" textLength="3.80" lengthAdjust="spacingAndGlyphs" class="w">1</text>
<text x="77.90" y="457" font-size="8.0" fill="#1f1f1f" stroke="#1f1f1f" stroke-width="0.13" textLength="4.00" lengthAdjust="spacingAndGlyphs">2</text>
<text x="122.70" y="457" font-size="8.0" fill="#1f1f1f" stroke="#1f1f1f" stroke-width="0.13" textLength="25.80" lengthAdjust="spacingAndGlyphs">25 / стр.</text>
<text x="167.80" y="456.5" font-size="8.0" fill="#1f1f1f" stroke="#1f1f1f" stroke-width="0.13" textLength="30.70" lengthAdjust="spacingAndGlyphs">Страница</text>
<text x="241.20" y="457" font-size="8.0" fill="#1f1f1f" stroke="#1f1f1f" stroke-width="0.13" textLength="27.60" lengthAdjust="spacingAndGlyphs">Перейти</text>
<text x="627.30" y="136" font-size="8.3" fill="#111" textLength="133.70" lengthAdjust="spacingAndGlyphs" class="w">Детальная информация о событии</text>
<text x="607.30" y="156" font-size="8.0" fill="#1f1f1f" stroke="#1f1f1f" stroke-width="0.13" textLength="32.40" lengthAdjust="spacingAndGlyphs">Действие:</text>
<text x="709.00" y="156" font-size="8.0" fill="#1f1f1f" stroke="#1f1f1f" stroke-width="0.13" textLength="34.60" lengthAdjust="spacingAndGlyphs">разрешить</text>
<text x="607.30" y="168" font-size="8.0" fill="#1f1f1f" stroke="#1f1f1f" stroke-width="0.13" textLength="32.40" lengthAdjust="spacingAndGlyphs">Важность:</text>
<text x="709.00" y="168" font-size="8.0" fill="#1f1f1f" stroke="#1f1f1f" stroke-width="0.13" textLength="25.60" lengthAdjust="spacingAndGlyphs">Ошибка</text>
<text x="607.30" y="183" font-size="8.3" fill="#111" textLength="91.60" lengthAdjust="spacingAndGlyphs" class="w">Информация о трафике</text>
<text x="607.30" y="196" font-size="8.0" fill="#1f1f1f" stroke="#1f1f1f" stroke-width="0.13" textLength="63.70" lengthAdjust="spacingAndGlyphs">Адрес отправителя:</text>
<text x="709.00" y="196" font-size="8.0" fill="#1f1f1f" stroke="#1f1f1f" stroke-width="0.13" textLength="45.70" lengthAdjust="spacingAndGlyphs">178.176.82.191</text>
<text x="607.30" y="208" font-size="8.0" fill="#1f1f1f" stroke="#1f1f1f" stroke-width="0.13" textLength="66.30" lengthAdjust="spacingAndGlyphs">Страна отправителя:</text>
<text x="709.00" y="208" font-size="8.0" fill="#1f1f1f" stroke="#1f1f1f" stroke-width="0.13" textLength="21.80" lengthAdjust="spacingAndGlyphs">Россия</text>
<text x="607.30" y="220" font-size="8.0" fill="#1f1f1f" stroke="#1f1f1f" stroke-width="0.13" textLength="60.30" lengthAdjust="spacingAndGlyphs">Адрес получателя:</text>
<text x="746.50" y="220" font-size="8.0" fill="#1f1f1f" stroke="#1f1f1f" stroke-width="0.13" textLength="8.20" lengthAdjust="spacingAndGlyphs">.84</text>
<text x="607.30" y="233" font-size="8.0" fill="#1f1f1f" stroke="#1f1f1f" stroke-width="0.13" textLength="63.70" lengthAdjust="spacingAndGlyphs">Страна получателя:</text>
<text x="709.00" y="233" font-size="8.0" fill="#1f1f1f" stroke="#1f1f1f" stroke-width="0.13" textLength="21.80" lengthAdjust="spacingAndGlyphs">Россия</text>
<text x="607.30" y="245" font-size="8.0" fill="#1f1f1f" stroke="#1f1f1f" stroke-width="0.13" textLength="57.40" lengthAdjust="spacingAndGlyphs">Имя отправителя:</text>
<text x="607.30" y="257" font-size="8.0" fill="#1f1f1f" stroke="#1f1f1f" stroke-width="0.13" textLength="62.50" lengthAdjust="spacingAndGlyphs">Домен получателя:</text>
<text x="607.30" y="270" font-size="8.0" fill="#1f1f1f" stroke="#1f1f1f" stroke-width="0.13" textLength="33.50" lengthAdjust="spacingAndGlyphs">Протокол:</text>
<text x="709.00" y="270" font-size="8.0" fill="#1f1f1f" stroke="#1f1f1f" stroke-width="0.13" textLength="11.10" lengthAdjust="spacingAndGlyphs">TCP</text>
<text x="607.30" y="282" font-size="8.0" fill="#1f1f1f" stroke="#1f1f1f" stroke-width="0.13" textLength="60.30" lengthAdjust="spacingAndGlyphs">Порт отправителя:</text>
<text x="709.00" y="282" font-size="8.0" fill="#1f1f1f" stroke="#1f1f1f" stroke-width="0.13" textLength="15.10" lengthAdjust="spacingAndGlyphs">1819</text>
<text x="607.30" y="294" font-size="8.0" fill="#1f1f1f" stroke="#1f1f1f" stroke-width="0.13" textLength="57.00" lengthAdjust="spacingAndGlyphs">Порт получателя:</text>
<text x="709.00" y="294" font-size="8.0" fill="#1f1f1f" stroke="#1f1f1f" stroke-width="0.13" textLength="11.10" lengthAdjust="spacingAndGlyphs">443</text>
<text x="607.30" y="309" font-size="8.3" fill="#111" textLength="116.20" lengthAdjust="spacingAndGlyphs" class="w">Дополнительная информация</text>
<text x="607.30" y="322" font-size="8.0" fill="#1f1f1f" stroke="#1f1f1f" stroke-width="0.13" textLength="88.20" lengthAdjust="spacingAndGlyphs">Идентификатор сигнатуры:</text>
<text x="709.00" y="322" font-size="8.0" fill="#1f1f1f" stroke="#1f1f1f" stroke-width="0.13" textLength="26.30" lengthAdjust="spacingAndGlyphs">4117516</text>
<text x="607.30" y="334" font-size="8.0" fill="#1f1f1f" stroke="#1f1f1f" stroke-width="0.13" textLength="35.10" lengthAdjust="spacingAndGlyphs">Сигнатура:</text>
<text x="708.60" y="334" font-size="8.0" fill="#1f1f1f" stroke="#1f1f1f" stroke-width="0.13" textLength="165.40" lengthAdjust="spacingAndGlyphs">User-Agent (python-requests) Inbound to Webserver</text>
<text x="607.30" y="367" font-size="8.0" fill="#1f1f1f" stroke="#1f1f1f" stroke-width="0.13" textLength="52.90" lengthAdjust="spacingAndGlyphs">Тело сигнатуры:</text>
<text x="607.30" y="400" font-size="8.0" fill="#1f1f1f" stroke="#1f1f1f" stroke-width="0.13" textLength="38.00" lengthAdjust="spacingAndGlyphs">Интерфейс:</text>
<text x="709.00" y="400" font-size="8.0" fill="#1f1f1f" stroke="#1f1f1f" stroke-width="0.13" textLength="20.40" lengthAdjust="spacingAndGlyphs">ge-0-1</text>
<text x="607.30" y="412" font-size="8.0" fill="#1f1f1f" stroke="#1f1f1f" stroke-width="0.13" textLength="87.90" lengthAdjust="spacingAndGlyphs">Количество срабатываний:</text>
<text x="709.00" y="412" font-size="8.0" fill="#1f1f1f" stroke="#1f1f1f" stroke-width="0.13" textLength="3.70" lengthAdjust="spacingAndGlyphs">1</text>
<text x="607.30" y="424" font-size="8.0" fill="#1f1f1f" stroke="#1f1f1f" stroke-width="0.13" textLength="31.70" lengthAdjust="spacingAndGlyphs">VRF-зона:</text>
<text x="709.00" y="424" font-size="8.0" fill="#1f1f1f" stroke="#1f1f1f" stroke-width="0.13" textLength="2.30" lengthAdjust="spacingAndGlyphs">-</text>
<text x="611.60" y="457" font-size="8.0" fill="#1f1f1f" stroke="#1f1f1f" stroke-width="0.13" textLength="26.30" lengthAdjust="spacingAndGlyphs">Закрыть</text>
<g clip-path="url(#ch)">
<text x="558.90" y="137" font-size="7.7" fill="#1f1f1f" textLength="28.40" lengthAdjust="spacingAndGlyphs" class="w">Страна п</text>
</g>
<g clip-path="url(#cr)">
<text x="58.70" y="156" font-size="8.0" fill="#2a9d4c" stroke="#2a9d4c" stroke-width="0.13" textLength="73.70" lengthAdjust="spacingAndGlyphs">13.05.2025 16:09:17.401</text>
<text x="150.60" y="156" font-size="8.0" fill="#fff" stroke="#fff" stroke-width="0.13" textLength="35.00" lengthAdjust="spacingAndGlyphs">разрешить</text>
<text x="222.80" y="156" font-size="8.0" fill="#2a9d4c" stroke="#2a9d4c" stroke-width="0.13" textLength="24.10" lengthAdjust="spacingAndGlyphs">ids3000</text>
<text x="338.10" y="156" font-size="8.0" fill="#3fab5f" stroke="#3fab5f" stroke-width="0.13" textLength="46.20" lengthAdjust="spacingAndGlyphs">178.176.82.191</text>
<path d="M338.10 157.35h46.20" stroke="#3fab5f" stroke-width="0.65" opacity="0.85"/>
<text x="394.70" y="156" font-size="8.0" fill="#2a9d4c" stroke="#2a9d4c" stroke-width="0.13" textLength="22.10" lengthAdjust="spacingAndGlyphs">Россия</text>
<text x="539.40" y="156" font-size="8.0" fill="#3fab5f" stroke="#3fab5f" stroke-width="0.13" textLength="9.20" lengthAdjust="spacingAndGlyphs">.84</text>
<path d="M539.40 157.35h9.20" stroke="#3fab5f" stroke-width="0.65" opacity="0.85"/>
<text x="559.00" y="156" font-size="8.0" fill="#2a9d4c" stroke="#2a9d4c" stroke-width="0.13" textLength="22.10" lengthAdjust="spacingAndGlyphs">Россия</text>
<text x="58.70" y="176" font-size="8.0" fill="#1f1f1f" stroke="#1f1f1f" stroke-width="0.13" textLength="73.70" lengthAdjust="spacingAndGlyphs">13.05.2025 16:02:48.589</text>
<text x="150.60" y="176" font-size="8.0" fill="#fff" stroke="#fff" stroke-width="0.13" textLength="35.00" lengthAdjust="spacingAndGlyphs">разрешить</text>
<text x="222.80" y="176" font-size="8.0" fill="#1f1f1f" stroke="#1f1f1f" stroke-width="0.13" textLength="24.10" lengthAdjust="spacingAndGlyphs">ids3000</text>
<text x="338.10" y="176" font-size="8.0" fill="#3fab5f" stroke="#3fab5f" stroke-width="0.13" textLength="46.20" lengthAdjust="spacingAndGlyphs">178.176.82.191</text>
<path d="M338.10 177.35h46.20" stroke="#3fab5f" stroke-width="0.65" opacity="0.85"/>
<text x="394.70" y="176" font-size="8.0" fill="#1f1f1f" stroke="#1f1f1f" stroke-width="0.13" textLength="22.10" lengthAdjust="spacingAndGlyphs">Россия</text>
<text x="539.40" y="176" font-size="8.0" fill="#3fab5f" stroke="#3fab5f" stroke-width="0.13" textLength="9.20" lengthAdjust="spacingAndGlyphs">.84</text>
<path d="M539.40 177.35h9.20" stroke="#3fab5f" stroke-width="0.65" opacity="0.85"/>
<text x="559.00" y="176" font-size="8.0" fill="#1f1f1f" stroke="#1f1f1f" stroke-width="0.13" textLength="22.10" lengthAdjust="spacingAndGlyphs">Россия</text>
<text x="58.70" y="195" font-size="8.0" fill="#1f1f1f" stroke="#1f1f1f" stroke-width="0.13" textLength="73.70" lengthAdjust="spacingAndGlyphs">13.05.2025 16:02:48.589</text>
<text x="150.60" y="195" font-size="8.0" fill="#fff" stroke="#fff" stroke-width="0.13" textLength="35.00" lengthAdjust="spacingAndGlyphs">разрешить</text>
<text x="222.80" y="195" font-size="8.0" fill="#1f1f1f" stroke="#1f1f1f" stroke-width="0.13" textLength="24.10" lengthAdjust="spacingAndGlyphs">ids3000</text>
<text x="338.10" y="195" font-size="8.0" fill="#3fab5f" stroke="#3fab5f" stroke-width="0.13" textLength="46.20" lengthAdjust="spacingAndGlyphs">178.176.82.191</text>
<path d="M338.10 196.35h46.20" stroke="#3fab5f" stroke-width="0.65" opacity="0.85"/>
<text x="394.70" y="195" font-size="8.0" fill="#1f1f1f" stroke="#1f1f1f" stroke-width="0.13" textLength="22.10" lengthAdjust="spacingAndGlyphs">Россия</text>
<text x="539.40" y="195" font-size="8.0" fill="#3fab5f" stroke="#3fab5f" stroke-width="0.13" textLength="9.20" lengthAdjust="spacingAndGlyphs">.84</text>
<path d="M539.40 196.35h9.20" stroke="#3fab5f" stroke-width="0.65" opacity="0.85"/>
<text x="559.00" y="195" font-size="8.0" fill="#1f1f1f" stroke="#1f1f1f" stroke-width="0.13" textLength="22.10" lengthAdjust="spacingAndGlyphs">Россия</text>
<text x="58.70" y="215" font-size="8.0" fill="#1f1f1f" stroke="#1f1f1f" stroke-width="0.13" textLength="73.70" lengthAdjust="spacingAndGlyphs">13.05.2025 15:54:25.659</text>
<text x="150.60" y="215" font-size="8.0" fill="#fff" stroke="#fff" stroke-width="0.13" textLength="35.00" lengthAdjust="spacingAndGlyphs">разрешить</text>
<text x="222.80" y="215" font-size="8.0" fill="#1f1f1f" stroke="#1f1f1f" stroke-width="0.13" textLength="24.10" lengthAdjust="spacingAndGlyphs">ids3000</text>
<text x="338.10" y="215" font-size="8.0" fill="#3fab5f" stroke="#3fab5f" stroke-width="0.13" textLength="46.20" lengthAdjust="spacingAndGlyphs">178.176.82.191</text>
<path d="M338.10 216.35h46.20" stroke="#3fab5f" stroke-width="0.65" opacity="0.85"/>
<text x="394.70" y="215" font-size="8.0" fill="#1f1f1f" stroke="#1f1f1f" stroke-width="0.13" textLength="22.10" lengthAdjust="spacingAndGlyphs">Россия</text>
<text x="539.40" y="215" font-size="8.0" fill="#3fab5f" stroke="#3fab5f" stroke-width="0.13" textLength="9.20" lengthAdjust="spacingAndGlyphs">.84</text>
<path d="M539.40 216.35h9.20" stroke="#3fab5f" stroke-width="0.65" opacity="0.85"/>
<text x="559.00" y="215" font-size="8.0" fill="#1f1f1f" stroke="#1f1f1f" stroke-width="0.13" textLength="22.10" lengthAdjust="spacingAndGlyphs">Россия</text>
<text x="58.70" y="235" font-size="8.0" fill="#1f1f1f" stroke="#1f1f1f" stroke-width="0.13" textLength="73.70" lengthAdjust="spacingAndGlyphs">13.05.2025 15:54:25.659</text>
<text x="150.60" y="235" font-size="8.0" fill="#fff" stroke="#fff" stroke-width="0.13" textLength="35.00" lengthAdjust="spacingAndGlyphs">разрешить</text>
<text x="222.80" y="235" font-size="8.0" fill="#1f1f1f" stroke="#1f1f1f" stroke-width="0.13" textLength="24.10" lengthAdjust="spacingAndGlyphs">ids3000</text>
<text x="338.10" y="235" font-size="8.0" fill="#3fab5f" stroke="#3fab5f" stroke-width="0.13" textLength="46.20" lengthAdjust="spacingAndGlyphs">178.176.82.191</text>
<path d="M338.10 236.35h46.20" stroke="#3fab5f" stroke-width="0.65" opacity="0.85"/>
<text x="394.70" y="235" font-size="8.0" fill="#1f1f1f" stroke="#1f1f1f" stroke-width="0.13" textLength="22.10" lengthAdjust="spacingAndGlyphs">Россия</text>
<text x="539.40" y="235" font-size="8.0" fill="#3fab5f" stroke="#3fab5f" stroke-width="0.13" textLength="9.20" lengthAdjust="spacingAndGlyphs">.84</text>
<path d="M539.40 236.35h9.20" stroke="#3fab5f" stroke-width="0.65" opacity="0.85"/>
<text x="559.00" y="235" font-size="8.0" fill="#1f1f1f" stroke="#1f1f1f" stroke-width="0.13" textLength="22.10" lengthAdjust="spacingAndGlyphs">Россия</text>
<text x="58.70" y="255" font-size="8.0" fill="#1f1f1f" stroke="#1f1f1f" stroke-width="0.13" textLength="73.70" lengthAdjust="spacingAndGlyphs">13.05.2025 15:48:03.440</text>
<text x="150.60" y="255" font-size="8.0" fill="#fff" stroke="#fff" stroke-width="0.13" textLength="35.00" lengthAdjust="spacingAndGlyphs">разрешить</text>
<text x="222.80" y="255" font-size="8.0" fill="#1f1f1f" stroke="#1f1f1f" stroke-width="0.13" textLength="24.10" lengthAdjust="spacingAndGlyphs">ids3000</text>
<text x="338.10" y="255" font-size="8.0" fill="#3fab5f" stroke="#3fab5f" stroke-width="0.13" textLength="46.20" lengthAdjust="spacingAndGlyphs">178.176.82.191</text>
<path d="M338.10 256.35h46.20" stroke="#3fab5f" stroke-width="0.65" opacity="0.85"/>
<text x="394.70" y="255" font-size="8.0" fill="#1f1f1f" stroke="#1f1f1f" stroke-width="0.13" textLength="22.10" lengthAdjust="spacingAndGlyphs">Россия</text>
<text x="539.40" y="255" font-size="8.0" fill="#3fab5f" stroke="#3fab5f" stroke-width="0.13" textLength="9.20" lengthAdjust="spacingAndGlyphs">.84</text>
<path d="M539.40 256.35h9.20" stroke="#3fab5f" stroke-width="0.65" opacity="0.85"/>
<text x="559.00" y="255" font-size="8.0" fill="#1f1f1f" stroke="#1f1f1f" stroke-width="0.13" textLength="22.10" lengthAdjust="spacingAndGlyphs">Россия</text>
<text x="58.70" y="274" font-size="8.0" fill="#1f1f1f" stroke="#1f1f1f" stroke-width="0.13" textLength="73.70" lengthAdjust="spacingAndGlyphs">13.05.2025 15:29:47.499</text>
<text x="150.60" y="274" font-size="8.0" fill="#fff" stroke="#fff" stroke-width="0.13" textLength="35.00" lengthAdjust="spacingAndGlyphs">разрешить</text>
<text x="222.80" y="274" font-size="8.0" fill="#1f1f1f" stroke="#1f1f1f" stroke-width="0.13" textLength="24.10" lengthAdjust="spacingAndGlyphs">ids3000</text>
<text x="338.10" y="274" font-size="8.0" fill="#3fab5f" stroke="#3fab5f" stroke-width="0.13" textLength="46.20" lengthAdjust="spacingAndGlyphs">178.176.82.191</text>
<path d="M338.10 275.35h46.20" stroke="#3fab5f" stroke-width="0.65" opacity="0.85"/>
<text x="394.70" y="274" font-size="8.0" fill="#1f1f1f" stroke="#1f1f1f" stroke-width="0.13" textLength="22.10" lengthAdjust="spacingAndGlyphs">Россия</text>
<text x="539.40" y="274" font-size="8.0" fill="#3fab5f" stroke="#3fab5f" stroke-width="0.13" textLength="9.20" lengthAdjust="spacingAndGlyphs">.84</text>
<path d="M539.40 275.35h9.20" stroke="#3fab5f" stroke-width="0.65" opacity="0.85"/>
<text x="559.00" y="274" font-size="8.0" fill="#1f1f1f" stroke="#1f1f1f" stroke-width="0.13" textLength="22.10" lengthAdjust="spacingAndGlyphs">Россия</text>
<text x="58.70" y="294" font-size="8.0" fill="#1f1f1f" stroke="#1f1f1f" stroke-width="0.13" textLength="73.70" lengthAdjust="spacingAndGlyphs">13.05.2025 15:19:09.226</text>
<text x="150.60" y="294" font-size="8.0" fill="#fff" stroke="#fff" stroke-width="0.13" textLength="35.00" lengthAdjust="spacingAndGlyphs">разрешить</text>
<text x="222.80" y="294" font-size="8.0" fill="#1f1f1f" stroke="#1f1f1f" stroke-width="0.13" textLength="24.10" lengthAdjust="spacingAndGlyphs">ids3000</text>
<text x="338.10" y="294" font-size="8.0" fill="#3fab5f" stroke="#3fab5f" stroke-width="0.13" textLength="46.20" lengthAdjust="spacingAndGlyphs">178.176.82.191</text>
<path d="M338.10 295.35h46.20" stroke="#3fab5f" stroke-width="0.65" opacity="0.85"/>
<text x="394.70" y="294" font-size="8.0" fill="#1f1f1f" stroke="#1f1f1f" stroke-width="0.13" textLength="22.10" lengthAdjust="spacingAndGlyphs">Россия</text>
<text x="539.40" y="294" font-size="8.0" fill="#3fab5f" stroke="#3fab5f" stroke-width="0.13" textLength="9.20" lengthAdjust="spacingAndGlyphs">.84</text>
<path d="M539.40 295.35h9.20" stroke="#3fab5f" stroke-width="0.65" opacity="0.85"/>
<text x="559.00" y="294" font-size="8.0" fill="#1f1f1f" stroke="#1f1f1f" stroke-width="0.13" textLength="22.10" lengthAdjust="spacingAndGlyphs">Россия</text>
<text x="58.70" y="314" font-size="8.0" fill="#1f1f1f" stroke="#1f1f1f" stroke-width="0.13" textLength="73.70" lengthAdjust="spacingAndGlyphs">13.05.2025 15:19:09.226</text>
<text x="150.60" y="314" font-size="8.0" fill="#fff" stroke="#fff" stroke-width="0.13" textLength="35.00" lengthAdjust="spacingAndGlyphs">разрешить</text>
<text x="222.80" y="314" font-size="8.0" fill="#1f1f1f" stroke="#1f1f1f" stroke-width="0.13" textLength="24.10" lengthAdjust="spacingAndGlyphs">ids3000</text>
<text x="338.10" y="314" font-size="8.0" fill="#3fab5f" stroke="#3fab5f" stroke-width="0.13" textLength="46.20" lengthAdjust="spacingAndGlyphs">178.176.82.191</text>
<path d="M338.10 315.35h46.20" stroke="#3fab5f" stroke-width="0.65" opacity="0.85"/>
<text x="394.70" y="314" font-size="8.0" fill="#1f1f1f" stroke="#1f1f1f" stroke-width="0.13" textLength="22.10" lengthAdjust="spacingAndGlyphs">Россия</text>
<text x="539.40" y="314" font-size="8.0" fill="#3fab5f" stroke="#3fab5f" stroke-width="0.13" textLength="9.20" lengthAdjust="spacingAndGlyphs">.84</text>
<path d="M539.40 315.35h9.20" stroke="#3fab5f" stroke-width="0.65" opacity="0.85"/>
<text x="559.00" y="314" font-size="8.0" fill="#1f1f1f" stroke="#1f1f1f" stroke-width="0.13" textLength="22.10" lengthAdjust="spacingAndGlyphs">Россия</text>
<text x="58.70" y="334" font-size="8.0" fill="#1f1f1f" stroke="#1f1f1f" stroke-width="0.13" textLength="73.70" lengthAdjust="spacingAndGlyphs">13.05.2025 15:19:09.225</text>
<text x="150.60" y="334" font-size="8.0" fill="#fff" stroke="#fff" stroke-width="0.13" textLength="35.00" lengthAdjust="spacingAndGlyphs">разрешить</text>
<text x="222.80" y="334" font-size="8.0" fill="#1f1f1f" stroke="#1f1f1f" stroke-width="0.13" textLength="24.10" lengthAdjust="spacingAndGlyphs">ids3000</text>
<text x="338.10" y="334" font-size="8.0" fill="#3fab5f" stroke="#3fab5f" stroke-width="0.13" textLength="46.20" lengthAdjust="spacingAndGlyphs">178.176.82.191</text>
<path d="M338.10 335.35h46.20" stroke="#3fab5f" stroke-width="0.65" opacity="0.85"/>
<text x="394.70" y="334" font-size="8.0" fill="#1f1f1f" stroke="#1f1f1f" stroke-width="0.13" textLength="22.10" lengthAdjust="spacingAndGlyphs">Россия</text>
<text x="539.40" y="334" font-size="8.0" fill="#3fab5f" stroke="#3fab5f" stroke-width="0.13" textLength="9.20" lengthAdjust="spacingAndGlyphs">.84</text>
<path d="M539.40 335.35h9.20" stroke="#3fab5f" stroke-width="0.65" opacity="0.85"/>
<text x="559.00" y="334" font-size="8.0" fill="#1f1f1f" stroke="#1f1f1f" stroke-width="0.13" textLength="22.10" lengthAdjust="spacingAndGlyphs">Россия</text>
<text x="58.70" y="353" font-size="8.0" fill="#1f1f1f" stroke="#1f1f1f" stroke-width="0.13" textLength="73.70" lengthAdjust="spacingAndGlyphs">13.05.2025 15:19:09.225</text>
<text x="150.60" y="353" font-size="8.0" fill="#fff" stroke="#fff" stroke-width="0.13" textLength="35.00" lengthAdjust="spacingAndGlyphs">разрешить</text>
<text x="222.80" y="353" font-size="8.0" fill="#1f1f1f" stroke="#1f1f1f" stroke-width="0.13" textLength="24.10" lengthAdjust="spacingAndGlyphs">ids3000</text>
<text x="338.10" y="353" font-size="8.0" fill="#3fab5f" stroke="#3fab5f" stroke-width="0.13" textLength="46.20" lengthAdjust="spacingAndGlyphs">178.176.82.191</text>
<path d="M338.10 354.35h46.20" stroke="#3fab5f" stroke-width="0.65" opacity="0.85"/>
<text x="394.70" y="353" font-size="8.0" fill="#1f1f1f" stroke="#1f1f1f" stroke-width="0.13" textLength="22.10" lengthAdjust="spacingAndGlyphs">Россия</text>
<text x="539.40" y="353" font-size="8.0" fill="#3fab5f" stroke="#3fab5f" stroke-width="0.13" textLength="9.20" lengthAdjust="spacingAndGlyphs">.84</text>
<path d="M539.40 354.35h9.20" stroke="#3fab5f" stroke-width="0.65" opacity="0.85"/>
<text x="559.00" y="353" font-size="8.0" fill="#1f1f1f" stroke="#1f1f1f" stroke-width="0.13" textLength="22.10" lengthAdjust="spacingAndGlyphs">Россия</text>
<text x="58.70" y="373" font-size="8.0" fill="#1f1f1f" stroke="#1f1f1f" stroke-width="0.13" textLength="73.70" lengthAdjust="spacingAndGlyphs">13.05.2025 15:09:02.109</text>
<text x="150.60" y="373" font-size="8.0" fill="#fff" stroke="#fff" stroke-width="0.13" textLength="35.00" lengthAdjust="spacingAndGlyphs">разрешить</text>
<text x="222.80" y="373" font-size="8.0" fill="#1f1f1f" stroke="#1f1f1f" stroke-width="0.13" textLength="24.10" lengthAdjust="spacingAndGlyphs">ids3000</text>
<text x="338.10" y="373" font-size="8.0" fill="#3fab5f" stroke="#3fab5f" stroke-width="0.13" textLength="46.20" lengthAdjust="spacingAndGlyphs">178.176.82.191</text>
<path d="M338.10 374.35h46.20" stroke="#3fab5f" stroke-width="0.65" opacity="0.85"/>
<text x="394.70" y="373" font-size="8.0" fill="#1f1f1f" stroke="#1f1f1f" stroke-width="0.13" textLength="22.10" lengthAdjust="spacingAndGlyphs">Россия</text>
<text x="539.40" y="373" font-size="8.0" fill="#3fab5f" stroke="#3fab5f" stroke-width="0.13" textLength="9.20" lengthAdjust="spacingAndGlyphs">.84</text>
<path d="M539.40 374.35h9.20" stroke="#3fab5f" stroke-width="0.65" opacity="0.85"/>
<text x="559.00" y="373" font-size="8.0" fill="#1f1f1f" stroke="#1f1f1f" stroke-width="0.13" textLength="22.10" lengthAdjust="spacingAndGlyphs">Россия</text>
<text x="58.70" y="393" font-size="8.0" fill="#1f1f1f" stroke="#1f1f1f" stroke-width="0.13" textLength="73.70" lengthAdjust="spacingAndGlyphs">13.05.2025 15:09:02.109</text>
<text x="150.60" y="393" font-size="8.0" fill="#fff" stroke="#fff" stroke-width="0.13" textLength="35.00" lengthAdjust="spacingAndGlyphs">разрешить</text>
<text x="222.80" y="393" font-size="8.0" fill="#1f1f1f" stroke="#1f1f1f" stroke-width="0.13" textLength="24.10" lengthAdjust="spacingAndGlyphs">ids3000</text>
<text x="338.10" y="393" font-size="8.0" fill="#3fab5f" stroke="#3fab5f" stroke-width="0.13" textLength="46.20" lengthAdjust="spacingAndGlyphs">178.176.82.191</text>
<path d="M338.10 394.35h46.20" stroke="#3fab5f" stroke-width="0.65" opacity="0.85"/>
<text x="394.70" y="393" font-size="8.0" fill="#1f1f1f" stroke="#1f1f1f" stroke-width="0.13" textLength="22.10" lengthAdjust="spacingAndGlyphs">Россия</text>
<text x="539.40" y="393" font-size="8.0" fill="#3fab5f" stroke="#3fab5f" stroke-width="0.13" textLength="9.20" lengthAdjust="spacingAndGlyphs">.84</text>
<path d="M539.40 394.35h9.20" stroke="#3fab5f" stroke-width="0.65" opacity="0.85"/>
<text x="559.00" y="393" font-size="8.0" fill="#1f1f1f" stroke="#1f1f1f" stroke-width="0.13" textLength="22.10" lengthAdjust="spacingAndGlyphs">Россия</text>
<text x="58.70" y="412" font-size="8.0" fill="#1f1f1f" stroke="#1f1f1f" stroke-width="0.13" textLength="73.70" lengthAdjust="spacingAndGlyphs">13.05.2025 15:09:02.109</text>
<text x="150.60" y="412" font-size="8.0" fill="#fff" stroke="#fff" stroke-width="0.13" textLength="35.00" lengthAdjust="spacingAndGlyphs">разрешить</text>
<text x="222.80" y="412" font-size="8.0" fill="#1f1f1f" stroke="#1f1f1f" stroke-width="0.13" textLength="24.10" lengthAdjust="spacingAndGlyphs">ids3000</text>
<text x="338.10" y="412" font-size="8.0" fill="#3fab5f" stroke="#3fab5f" stroke-width="0.13" textLength="46.20" lengthAdjust="spacingAndGlyphs">178.176.82.191</text>
<path d="M338.10 413.35h46.20" stroke="#3fab5f" stroke-width="0.65" opacity="0.85"/>
<text x="394.70" y="412" font-size="8.0" fill="#1f1f1f" stroke="#1f1f1f" stroke-width="0.13" textLength="22.10" lengthAdjust="spacingAndGlyphs">Россия</text>
<text x="539.40" y="412" font-size="8.0" fill="#3fab5f" stroke="#3fab5f" stroke-width="0.13" textLength="9.20" lengthAdjust="spacingAndGlyphs">.84</text>
<path d="M539.40 413.35h9.20" stroke="#3fab5f" stroke-width="0.65" opacity="0.85"/>
<text x="559.00" y="412" font-size="8.0" fill="#1f1f1f" stroke="#1f1f1f" stroke-width="0.13" textLength="22.10" lengthAdjust="spacingAndGlyphs">Россия</text>
<text x="58.70" y="432" font-size="8.0" fill="#1f1f1f" stroke="#1f1f1f" stroke-width="0.13" textLength="73.70" lengthAdjust="spacingAndGlyphs">13.05.2025 15:02:47.060</text>
<text x="150.60" y="432" font-size="8.0" fill="#fff" stroke="#fff" stroke-width="0.13" textLength="35.00" lengthAdjust="spacingAndGlyphs">разрешить</text>
<text x="222.80" y="432" font-size="8.0" fill="#1f1f1f" stroke="#1f1f1f" stroke-width="0.13" textLength="24.10" lengthAdjust="spacingAndGlyphs">ids3000</text>
<text x="338.10" y="432" font-size="8.0" fill="#3fab5f" stroke="#3fab5f" stroke-width="0.13" textLength="46.20" lengthAdjust="spacingAndGlyphs">178.176.82.191</text>
<path d="M338.10 433.35h46.20" stroke="#3fab5f" stroke-width="0.65" opacity="0.85"/>
<text x="394.70" y="432" font-size="8.0" fill="#1f1f1f" stroke="#1f1f1f" stroke-width="0.13" textLength="22.10" lengthAdjust="spacingAndGlyphs">Россия</text>
<text x="539.40" y="432" font-size="8.0" fill="#3fab5f" stroke="#3fab5f" stroke-width="0.13" textLength="9.20" lengthAdjust="spacingAndGlyphs">.84</text>
<path d="M539.40 433.35h9.20" stroke="#3fab5f" stroke-width="0.65" opacity="0.85"/>
<text x="559.00" y="432" font-size="8.0" fill="#1f1f1f" stroke="#1f1f1f" stroke-width="0.13" textLength="22.10" lengthAdjust="spacingAndGlyphs">Россия</text>
</g>
</svg></body></html>
